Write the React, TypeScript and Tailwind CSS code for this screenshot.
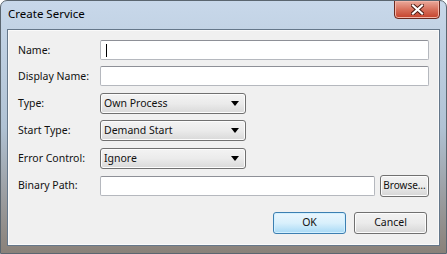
import React from "react";

const font = { fontFamily: '"Noto Sans", "Open Sans", sans-serif' };

function Label({ children }: { children: React.ReactNode }) {
  return <div className="w-[82px] shrink-0 text-[10.5px] leading-none text-[#111]">{children}</div>;
}

function TextBox({ width, cursor }: { width: string; cursor?: boolean }) {
  return (
    <div
      className={`${width} h-[20px] rounded-[2px] border border-[#b5b8be] border-t-[#8e9097] bg-white flex items-center pl-[5px]`}
    >
      {cursor && <div className="w-px h-[13px] bg-black" />}
    </div>
  );
}

function Combo({ value }: { value: string }) {
  return (
    <div className="w-[146px] h-[21px] rounded-[3px] border border-[#707070] bg-gradient-to-b from-[#f3f3f3] via-[#ebebeb] to-[#d9d9d9] flex items-center justify-between pl-[3px] pr-[6px] shadow-[inset_0_0_0_1px_#fcfcfc]">
      <span className="text-[10.5px] leading-none text-[#111]">{value}</span>
      <svg width="8" height="5" viewBox="0 0 8 5">
        <path d="M0 0h8L4 5z" fill="#000" />
      </svg>
    </div>
  );
}

function Button({ label, width, focused, small }: { label: string; width: string; focused?: boolean; small?: boolean }) {
  return (
    <div
      className={
        (focused
          ? `${width} h-[22px] rounded-[3px] border border-[#3c7fb1] bg-gradient-to-b from-[#eaf6fd] via-[#d9f0fc] to-[#a7d9f5] shadow-[inset_0_0_0_1px_#d2f0ff] flex items-center justify-center text-[#111]`
          : `${width} h-[22px] rounded-[3px] border border-[#707070] bg-gradient-to-b from-[#f2f2f2] via-[#ebebeb] to-[#d6d6d6] shadow-[inset_0_0_0_1px_#fcfcfc] flex items-center justify-center text-[#111]`) +
        (small ? " text-[10px]" : " text-[10.5px]")
      }
    >
      {label}
    </div>
  );
}

export default function App() {
  return (
    <div style={font} className="w-[447px] h-[254px] flex flex-col rounded-t-[7px] border border-[#5b6670] bg-gradient-to-b from-[#c8d8ea] via-[#b0c2d4] to-[#8a8179] px-[6px] pb-[7px] overflow-hidden">
      <div className="h-[28px] shrink-0 flex justify-between">
        <div className="pl-[1px] pt-[7px] text-[11.5px] leading-none text-black">Create Service</div>
        <div className="w-[46px] h-[19px] -mt-px rounded-b-[4px] border border-[#6b2a20] bg-gradient-to-b from-[#e9a99b] via-[#d7705c] to-[#c4402a] shadow-[inset_0_0_0_1px_#f3b5a8] flex items-center justify-center">
          <svg width="13" height="11" viewBox="0 0 13 11">
            <path d="M2 1.5l9 8M11 1.5l-9 8" stroke="#4a1a12" strokeWidth="4" strokeLinecap="square" />
            <path d="M2 1.5l9 8M11 1.5l-9 8" stroke="#fff" strokeWidth="2.2" strokeLinecap="square" />
          </svg>
        </div>
      </div>
      <div className="flex-1 border border-[#65778a] bg-[#f0f0f0] shadow-[inset_0_0_0_1px_#fafafa] pl-[10px] pr-[10px] pt-[10px] flex flex-col">
        <div className="flex items-center h-[20px]">
          <Label>Name:</Label>
          <TextBox width="flex-1" cursor />
        </div>
        <div className="flex items-center h-[20px] mt-[6px]">
          <Label>Display Name:</Label>
          <TextBox width="flex-1" />
        </div>
        <div className="flex items-center h-[21px] mt-[7px]">
          <Label>Type:</Label>
          <Combo value="Own Process" />
        </div>
        <div className="flex items-center h-[21px] mt-[6px]">
          <Label>Start Type:</Label>
          <Combo value="Demand Start" />
        </div>
        <div className="flex items-center h-[21px] mt-[7px]">
          <Label>Error Control:</Label>
          <Combo value="Ignore" />
        </div>
        <div className="flex items-center h-[21px] mt-[6px]">
          <Label>Binary Path:</Label>
          <TextBox width="w-[276px]" />
          <div className="ml-[5px]">
            <Button label="Browse…" width="w-[49px]" small />
          </div>
        </div>
        <div className="flex justify-end gap-[8px] mt-[16px] pr-[2px]">
          <Button label="OK" width="w-[73px]" focused />
          <Button label="Cancel" width="w-[73px]" />
        </div>
      </div>
    </div>
  );
}
